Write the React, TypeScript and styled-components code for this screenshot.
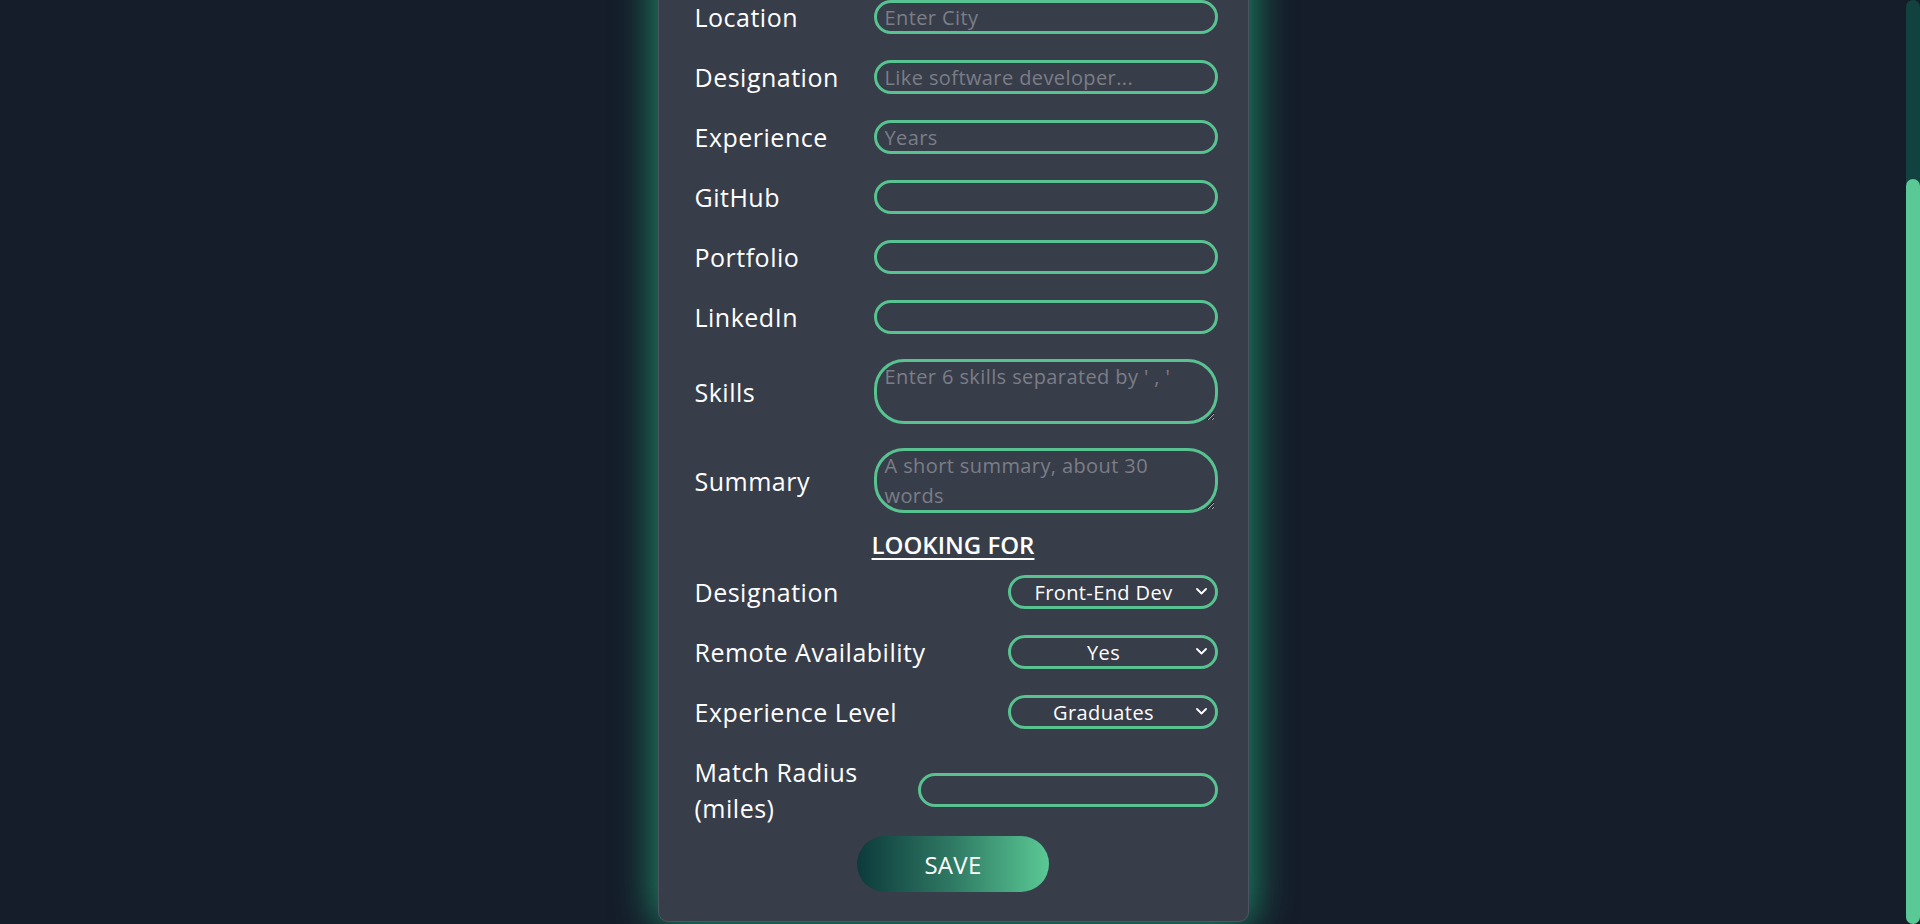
import React, { useLayoutEffect, useRef, useState } from "react";
import styled, { createGlobalStyle } from "styled-components";

const GlobalStyle = createGlobalStyle`
  * {
    box-sizing: border-box;
  }
  html,
  body {
    margin: 0;
    padding: 0;
    height: 100%;
    overflow: hidden;
    background: #151c2a;
  }
  body {
    font-family: "Open Sans", "Liberation Sans", sans-serif;
    color: #ffffff;
  }
`;

const Shell = styled.div`
  display: flex;
  height: 100vh;
  background: #151c2a;
`;

const Page = styled.div`
  flex: 1;
  overflow-y: auto;
  padding: 16px 0 2px;
  scrollbar-width: none;
  &::-webkit-scrollbar {
    display: none;
  }
`;

const ScrollTrack = styled.div`
  width: 14px;
  flex-shrink: 0;
  background: #12423f;
  border-radius: 7px;
  display: flex;
  flex-direction: column;
`;

const ScrollThumb = styled.div`
  width: 100%;
  background: #5ac995;
  border-radius: 7px;
`;

const Card = styled.form`
  width: 591px;
  margin: 0 auto;
  background: #383d4a;
  border: 1px solid #4d5363;
  border-radius: 10px;
  box-shadow: 0 0 40px 3px #1e9168;
  padding: 24px 30px 29px 36px;
  display: flex;
  flex-direction: column;
  gap: 24px;
`;

const Heading = styled.h2`
  margin: -10px 6px -13px 0;
  font-size: 24px;
  line-height: 36px;
  font-weight: 600;
  text-align: center;
  text-decoration: underline;
  text-underline-offset: 4px;
  text-decoration-thickness: 2px;
`;

const TopHeading = styled(Heading)`
  margin: 0;
`;

const Row = styled.div`
  display: flex;
  align-items: center;
  justify-content: space-between;
  min-height: 36px;
`;

const Label = styled.label<{ $maxWidth?: number }>`
  font-size: 25px;
  line-height: 36px;
  font-weight: 500;
  letter-spacing: 0.5px;
  color: #ffffff;
  max-width: ${(p) => (p.$maxWidth ? `${p.$maxWidth}px` : "none")};
`;

const fieldBase = `
  border: 3px solid #58c391;
  background: transparent;
  color: #ffffff;
  font-family: "Open Sans", "Liberation Sans", sans-serif;
  font-size: 20px;
  letter-spacing: 0.4px;
  outline: none;
  &::placeholder {
    color: #7b7e87;
  }
`;

const Input = styled.input<{ $width?: number }>`
  ${fieldBase}
  width: ${(p) => p.$width ?? 344}px;
  height: 34px;
  border-radius: 17px;
  padding: 0 8px;
`;

const TextArea = styled.textarea`
  ${fieldBase}
  width: 344px;
  height: 65px;
  border-radius: 30px;
  padding: 0 16px 0 8px;
  line-height: 30px;
  display: block;
`;

const SelectWrap = styled.div`
  position: relative;
  width: 210px;
  height: 34px;
`;

const Select = styled.select`
  ${fieldBase}
  appearance: none;
  width: 100%;
  height: 100%;
  border-radius: 17px;
  padding: 0 24px 0 6px;
  font-weight: 500;
  text-align: center;
  text-align-last: center;
  cursor: pointer;
  option {
    background: #383d4a;
    color: #ffffff;
  }
`;

const Chevron = styled.svg`
  position: absolute;
  right: 11px;
  top: 13px;
  width: 11px;
  height: 7px;
  pointer-events: none;
`;

const SaveButton = styled.button`
  align-self: center;
  margin-top: -14px;
  margin-right: 6px;
  width: 192px;
  height: 56px;
  border: none;
  border-radius: 28px;
  background: linear-gradient(90deg, #0d3a3b 0%, #2f7a64 50%, #5ac995 100%);
  color: #ffffff;
  font-family: "Open Sans", "Liberation Sans", sans-serif;
  font-size: 24px;
  font-weight: 500;
  letter-spacing: 0.3px;
  cursor: pointer;
`;

const textFields = [
  { label: "Name", placeholder: "Full name" },
  { label: "Email", placeholder: "you@example.com" },
  { label: "Location", placeholder: "Enter City" },
  { label: "Designation", placeholder: "Like software developer..." },
  { label: "Experience", placeholder: "Years" },
  { label: "GitHub", placeholder: "" },
  { label: "Portfolio", placeholder: "" },
  { label: "LinkedIn", placeholder: "" },
];

const lookingFor = [
  { label: "Designation", options: ["Front-End Dev", "Back-End Dev", "Full-Stack Dev"] },
  { label: "Remote Availability", options: ["Yes", "No"] },
  { label: "Experience Level", options: ["Graduates", "Junior", "Mid-Level", "Senior"] },
];

function SelectField({ options }: { options: string[] }) {
  return (
    <SelectWrap>
      <Select defaultValue={options[0]}>
        {options.map((o) => (
          <option key={o}>{o}</option>
        ))}
      </Select>
      <Chevron viewBox="0 0 11 7" fill="none">
        <path d="M1 1l4.5 4.5L10 1" stroke="#ffffff" strokeWidth="1.8" strokeLinecap="round" strokeLinejoin="round" />
      </Chevron>
    </SelectWrap>
  );
}

function App() {
  const pageRef = useRef<HTMLDivElement>(null);
  const [thumb, setThumb] = useState({ top: 0, height: 0 });

  const updateThumb = () => {
    const el = pageRef.current;
    if (!el) return;
    const ratio = el.clientHeight / el.scrollHeight;
    setThumb({ top: el.scrollTop * ratio, height: el.clientHeight * ratio });
  };

  // the screenshot shows the form scrolled to its end
  useLayoutEffect(() => {
    if (pageRef.current) pageRef.current.scrollTop = pageRef.current.scrollHeight;
    updateThumb();
  }, []);

  return (
    <>
      <GlobalStyle />
      <Shell>
        <Page ref={pageRef} onScroll={updateThumb}>
          <Card onSubmit={(e) => e.preventDefault()}>
            <TopHeading>EDIT PROFILE</TopHeading>
            {textFields.map((f) => (
              <Row key={f.label}>
                <Label>{f.label}</Label>
                <Input placeholder={f.placeholder} />
              </Row>
            ))}
            <Row>
              <Label>Skills</Label>
              <TextArea placeholder="Enter 6 skills separated by ' , '" />
            </Row>
            <Row>
              <Label>Summary</Label>
              <TextArea placeholder="A short summary, about 30 words" />
            </Row>
            <Heading>LOOKING FOR</Heading>
            {lookingFor.map((f) => (
              <Row key={f.label}>
                <Label>{f.label}</Label>
                <SelectField options={f.options} />
              </Row>
            ))}
            <Row>
              <Label $maxWidth={190}>Match Radius (miles)</Label>
              <Input $width={300} />
            </Row>
            <SaveButton type="submit">SAVE</SaveButton>
          </Card>
        </Page>
        <ScrollTrack>
          <ScrollThumb style={{ marginTop: thumb.top, height: thumb.height }} />
        </ScrollTrack>
      </Shell>
    </>
  );
}

export default App;
